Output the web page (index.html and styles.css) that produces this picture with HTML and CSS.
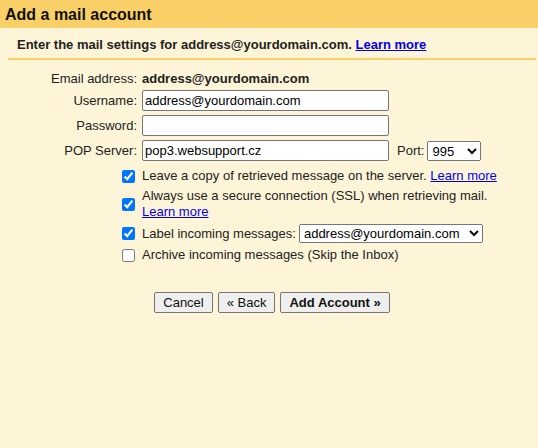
FILE: index.html
```html
<!DOCTYPE html>
<html lang="en">
<head>
    <meta charset="UTF-8">
    <meta name="viewport" content="width=device-width, initial-scale=1.0">
    <title>Add a mail account</title>
    <link rel="stylesheet" href="styles.css">
</head>
<body>
    <div class="header">Add a mail account</div>

    <div class="intro">
        Enter the mail settings for address@yourdomain.com. <a href="#">Learn more</a>
    </div>

    <!-- Settings form -->
    <div class="form">
        <div class="label first">Email address:</div>
        <div class="value first"><b>address@yourdomain.com</b></div>

        <label class="label" for="username">Username:</label>
        <div class="value"><input type="text" id="username" class="field" value="address@yourdomain.com"></div>

        <label class="label" for="password">Password:</label>
        <div class="value"><input type="password" id="password" class="field"></div>

        <label class="label" for="server">POP Server:</label>
        <div class="value">
            <input type="text" id="server" class="field" value="pop3.websupport.cz">
            <label class="port-label" for="port">Port:</label>
            <select id="port" class="port">
                <option>995</option>
                <option>110</option>
            </select>
        </div>
    </div>

    <!-- Options -->
    <div class="options">
        <div class="check"><input type="checkbox" id="leave" checked></div>
        <label class="option" for="leave">Leave a copy of retrieved message on the server. <a href="#">Learn more</a></label>

        <div class="check"><input type="checkbox" id="ssl" checked></div>
        <label class="option" for="ssl">Always use a secure connection (SSL) when retrieving mail.<br><a href="#">Learn more</a></label>

        <div class="check"><input type="checkbox" id="labelmsg" checked></div>
        <div class="option inline">
            <label for="labelmsg">Label incoming messages:</label>
            <select class="label-select">
                <option>address@yourdomain.com</option>
            </select>
        </div>

        <div class="check"><input type="checkbox" id="archive"></div>
        <label class="option" for="archive">Archive incoming messages (Skip the Inbox)</label>
    </div>

    <div class="actions">
        <button class="btn">Cancel</button>
        <button class="btn">&laquo; Back</button>
        <button class="btn primary">Add Account &raquo;</button>
    </div>
</body>
</html>
```

FILE: styles.css
```css
body {
    font-family: "Liberation Sans", Arial, sans-serif;
    font-size: 13px;
    color: #222;
    background-color: #fef5d8;
    margin: 0;
}
a {
    color: #0000ee;
}
.header {
    background-color: #f9d067;
    height: 28px;
    line-height: 30px;
    padding-left: 5px;
    font-size: 16px;
    font-weight: bold;
    color: #111;
}
.intro {
    margin: 0 2px 0 8px;
    padding: 9px 0 6px 9px;
    border-bottom: 2px solid #f9d067;
    font-weight: bold;
}
.form {
    display: grid;
    grid-template-columns: 137px auto;
    column-gap: 5px;
    margin-top: 9px;
}
.label {
    text-align: right;
    height: 25px;
    line-height: 22px;
}
.value {
    display: flex;
    align-items: flex-start;
    height: 25px;
    line-height: 22px;
}
.label.first,
.value.first {
    height: 21px;
    line-height: 20px;
}
.field {
    width: 247px;
    height: 21px;
    box-sizing: border-box;
    margin: 0;
    padding: 1px 2px;
    font-family: inherit;
    font-size: 13px;
    border: 1px solid #767676;
    border-radius: 2px;
}
.port-label {
    margin-left: 8px;
    margin-right: 3px;
    line-height: 22px;
}
.port {
    width: 54px;
    height: 20px;
    margin-top: 1px;
    font-family: inherit;
    font-size: 13px;
}
.options {
    display: grid;
    grid-template-columns: 137px auto;
    column-gap: 5px;
    row-gap: 4px;
    margin-top: 3px;
}
.check {
    display: flex;
    align-items: center;
    justify-content: flex-end;
}
.check input {
    width: 13px;
    height: 13px;
    margin: 0 2px 0 0;
    accent-color: #0075ff;
}
.option {
    line-height: 16px;
}
.option.inline {
    display: flex;
    align-items: center;
    height: 19px;
}
.label-select {
    width: 184px;
    height: 19px;
    margin-left: 3px;
    font-family: inherit;
    font-size: 13px;
}
.actions {
    display: flex;
    justify-content: center;
    gap: 5px;
    margin-top: 29px;
    padding-left: 6px;
}
.btn {
    height: 21px;
    font-family: inherit;
    font-size: 13px;
    padding: 0 8px;
    border: 1px solid #767676;
    border-radius: 2px;
    background-color: #efefef;
    color: #111;
}
.btn.primary {
    font-weight: bold;
}
```
